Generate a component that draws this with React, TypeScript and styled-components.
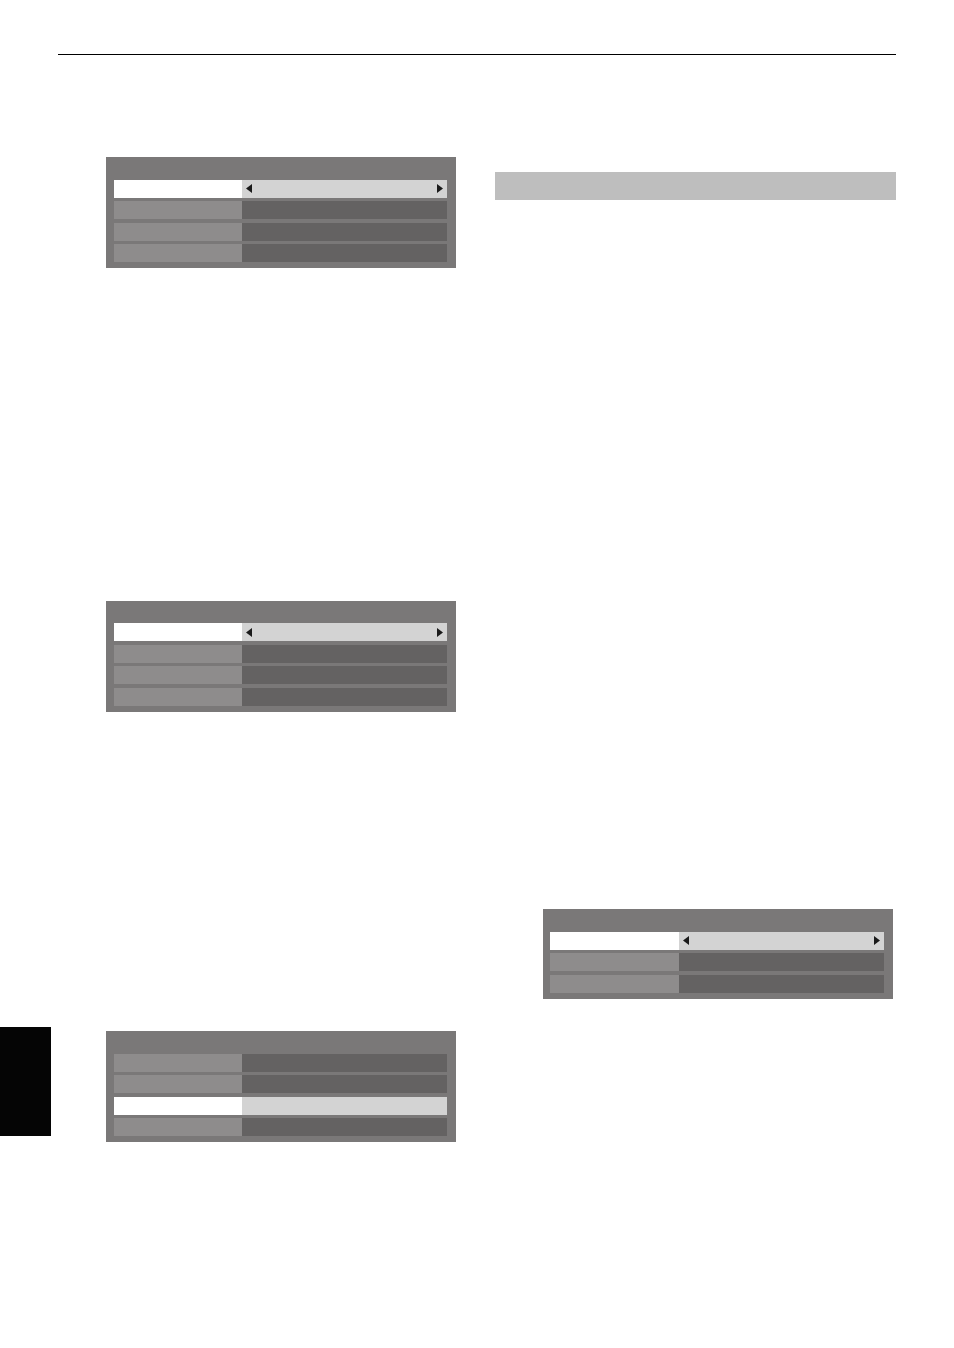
import React from "react";
import styled, { createGlobalStyle } from "styled-components";

const GlobalStyle = createGlobalStyle`
  html, body {
    margin: 0;
    padding: 0;
    background: #ffffff;
    font-family: "Liberation Sans", Arial, sans-serif;
  }
`;

const Page = styled.div`
  display: flex;
  width: 954px;
  height: 1348px;
  background: #ffffff;
`;

const SideRail = styled.div`
  width: 51px;
  flex: none;
`;

const EdgeTab = styled.div`
  margin-top: 1027px;
  width: 51px;
  height: 109px;
  background: #050505;
`;

const Content = styled.div`
  margin-left: 7px;
  width: 838px;
  padding-top: 54px;
`;

const Rule = styled.div`
  height: 1px;
  background: #000000;
`;

const Columns = styled.div`
  display: grid;
  grid-template-columns: 437px 401px;
`;

const Column = styled.div`
  display: flex;
  flex-direction: column;
`;

const SectionBar = styled.div`
  margin-top: 117px;
  height: 28px;
  background: #bebebe;
`;

const MenuBox = styled.div<{ $top: number; $padLeft?: number }>`
  margin-top: ${(p) => p.$top}px;
  margin-left: 48px;
  width: 350px;
  box-sizing: border-box;
  padding: 22.5px 9px 6px ${(p) => p.$padLeft ?? 8}px;
  background: #7a7878;
  display: flex;
  flex-direction: column;
  gap: 3.5px;
`;

const Row = styled.div<{ $leftWidth?: number }>`
  display: grid;
  grid-template-columns: ${(p) => p.$leftWidth ?? 128}px 1fr;
  height: 18px;
`;

const Label = styled.div<{ $active?: boolean }>`
  background: ${(p) => (p.$active ? "#ffffff" : "#8e8c8c")};
`;

const Value = styled.div<{ $active?: boolean }>`
  background: ${(p) => (p.$active ? "#d3d3d3" : "#646262")};
  display: flex;
  align-items: center;
  justify-content: space-between;
  padding: 0 4px;
`;

const Arrow: React.FC<{ dir: "left" | "right" }> = ({ dir }) => (
  <svg width="6" height="9" viewBox="0 0 6 9">
    <polygon
      points={dir === "left" ? "6,0 0,4.5 6,9" : "0,0 6,4.5 0,9"}
      fill="#1a1a1a"
    />
  </svg>
);

type MenuProps = {
  rows: number;
  active: number;
  arrows?: boolean;
  top: number;
  padLeft?: number;
  leftWidth?: number;
};

const Menu: React.FC<MenuProps> = ({ rows, active, arrows, top, padLeft, leftWidth }) => (
  <MenuBox $top={top} $padLeft={padLeft}>
    {Array.from({ length: rows }).map((_, i) => {
      const on = i === active;
      return (
        <Row key={i} $leftWidth={leftWidth}>
          <Label $active={on} />
          <Value $active={on}>
            {on && arrows && (
              <>
                <Arrow dir="left" />
                <Arrow dir="right" />
              </>
            )}
          </Value>
        </Row>
      );
    })}
  </MenuBox>
);

export default function App() {
  return (
    <>
      <GlobalStyle />
      <Page>
        <SideRail>
          <EdgeTab />
        </SideRail>
        <Content>
          <Rule />
          <Columns>
            <Column>
              <Menu rows={4} active={0} arrows top={102} />
              <Menu rows={4} active={0} arrows top={332.5} />
              <Menu rows={4} active={2} top={319.5} />
            </Column>
            <Column>
              <SectionBar />
              <Menu rows={3} active={0} arrows top={709} padLeft={7} leftWidth={129} />
            </Column>
          </Columns>
        </Content>
      </Page>
    </>
  );
}
